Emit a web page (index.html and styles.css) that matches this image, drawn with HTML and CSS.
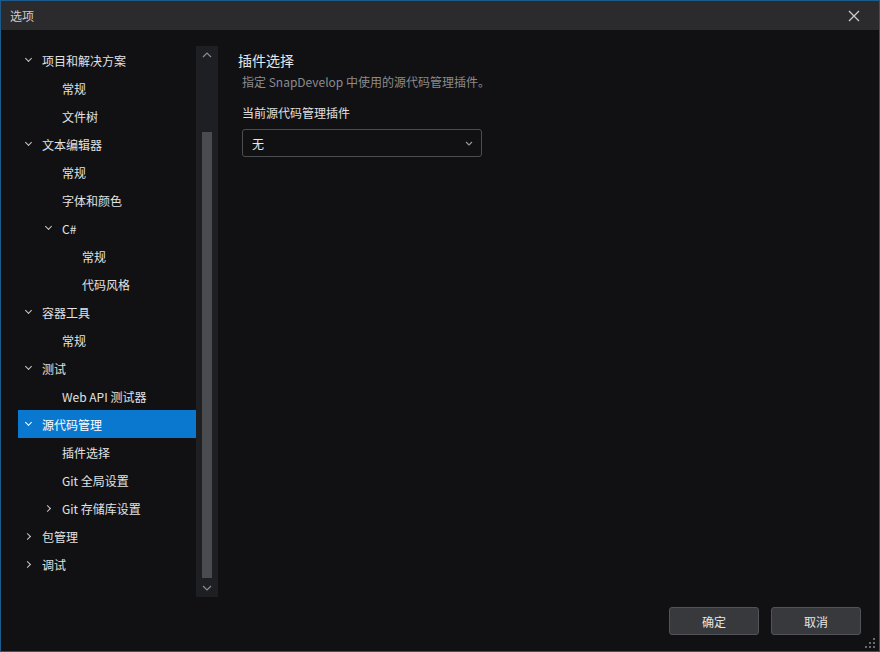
FILE: index.html
```html
<!DOCTYPE html>
<html lang="zh-CN">
<head>
    <meta charset="UTF-8">
    <title>选项</title>
    <link rel="stylesheet" href="styles.css">
</head>
<body>
    <div class="window">
        <div class="titlebar">
            <span class="title">选项</span>
            <svg class="close" width="12" height="12" viewBox="0 0 12 12">
                <path d="M1 1 L11 11 M11 1 L1 11" stroke="#cfcfcf" stroke-width="1.2" fill="none"/>
            </svg>
        </div>

        <div class="main">
            <div class="sidebar">
                <ul class="tree">
                    <li class="row lv0"><span class="chev down"></span>项目和解决方案</li>
                    <li class="row lv1"><span class="chev"></span>常规</li>
                    <li class="row lv1"><span class="chev"></span>文件树</li>
                    <li class="row lv0"><span class="chev down"></span>文本编辑器</li>
                    <li class="row lv1"><span class="chev"></span>常规</li>
                    <li class="row lv1"><span class="chev"></span>字体和颜色</li>
                    <li class="row lv1"><span class="chev down"></span>C#</li>
                    <li class="row lv2"><span class="chev"></span>常规</li>
                    <li class="row lv2"><span class="chev"></span>代码风格</li>
                    <li class="row lv0"><span class="chev down"></span>容器工具</li>
                    <li class="row lv1"><span class="chev"></span>常规</li>
                    <li class="row lv0"><span class="chev down"></span>测试</li>
                    <li class="row lv1"><span class="chev"></span>Web API 测试器</li>
                    <li class="row lv0 selected"><span class="chev down"></span>源代码管理</li>
                    <li class="row lv1"><span class="chev"></span>插件选择</li>
                    <li class="row lv1"><span class="chev"></span>Git 全局设置</li>
                    <li class="row lv1"><span class="chev right"></span>Git 存储库设置</li>
                    <li class="row lv0"><span class="chev right"></span>包管理</li>
                    <li class="row lv0"><span class="chev right"></span>调试</li>
                </ul>
                <div class="scrollbar">
                    <svg class="arrow" width="10" height="6" viewBox="0 0 10 6">
                        <path d="M1 5 L5 1 L9 5" stroke="#8d8d90" stroke-width="1.2" fill="none"/>
                    </svg>
                    <div class="track">
                        <div class="thumb"></div>
                    </div>
                    <svg class="arrow" width="10" height="6" viewBox="0 0 10 6">
                        <path d="M1 1 L5 5 L9 1" stroke="#8d8d90" stroke-width="1.2" fill="none"/>
                    </svg>
                </div>
            </div>

            <div class="content">
                <h2 class="heading">插件选择</h2>
                <p class="desc">指定 SnapDevelop 中使用的源代码管理插件。</p>
                <p class="label">当前源代码管理插件</p>
                <div class="select">
                    <span>无</span>
                    <svg width="8" height="5" viewBox="0 0 8 5">
                        <path d="M1 1 L4 4 L7 1" stroke="#9a9a9c" stroke-width="1.1" fill="none"/>
                    </svg>
                </div>
            </div>
        </div>

        <div class="footer">
            <button class="btn">确定</button>
            <button class="btn">取消</button>
        </div>

        <svg class="grip" width="10" height="10" viewBox="0 0 10 10">
            <rect x="8" y="0" width="2" height="2" fill="#6b6b6e"/>
            <rect x="4" y="4" width="2" height="2" fill="#6b6b6e"/>
            <rect x="8" y="4" width="2" height="2" fill="#6b6b6e"/>
            <rect x="0" y="8" width="2" height="2" fill="#6b6b6e"/>
            <rect x="4" y="8" width="2" height="2" fill="#6b6b6e"/>
            <rect x="8" y="8" width="2" height="2" fill="#6b6b6e"/>
        </svg>
    </div>
</body>
</html>
```

FILE: styles.css
```css
*{
    box-sizing: border-box;
}
body{
    margin: 0;
    background: #111114;
    font-family: "Noto Sans CJK SC", "Noto Sans", sans-serif;
    font-size: 12px;
    color: #e2e2e2;
}
.window{
    position: relative;
    width: 880px;
    height: 652px;
    border: 1px solid #1d5b8c;
    background: #111114;
    display: flex;
    flex-direction: column;
}
/* 标题栏 */
.titlebar{
    height: 29px;
    background: #2b2b2e;
    display: flex;
    align-items: center;
    justify-content: space-between;
    padding: 0 19px 0 9px;
}
.title{
    color: #cdcdcd;
    font-size: 12px;
}
.main{
    flex: 1;
    display: flex;
    padding: 16px 0 0 17px;
}
/* 左侧树 */
.sidebar{
    display: flex;
    height: 551px;
}
.tree{
    list-style: none;
    margin: 0;
    padding: 0;
    width: 178px;
}
.row{
    height: 28px;
    display: flex;
    align-items: center;
    padding-left: 3px;
    white-space: nowrap;
}
.lv1{
    padding-left: 23px;
}
.lv2{
    padding-left: 43px;
}
.selected{
    background: #0b78cf;
    color: #ffffff;
}
.chev{
    width: 16px;
    height: 16px;
    margin-right: 5px;
    position: relative;
    flex: none;
}
.chev.down::before, .chev.right::before{
    content: "";
    position: absolute;
    width: 4px;
    height: 4px;
    border-right: 1.2px solid #c9c9c9;
    border-bottom: 1.2px solid #c9c9c9;
}
.chev.down::before{
    left: 5px;
    top: 4px;
    transform: rotate(45deg);
}
.chev.right::before{
    left: 4px;
    top: 6px;
    transform: rotate(-45deg);
}
.selected .chev::before{
    border-color: #ffffff;
}
.scrollbar{
    width: 22px;
    background: #1e1f22;
    display: flex;
    flex-direction: column;
    align-items: center;
    padding: 6px 0 6px;
}
.arrow{
    flex: none;
}
.track{
    flex: 1;
    width: 10px;
    display: flex;
    flex-direction: column;
    justify-content: flex-end;
    padding: 0 0 7px;
}
.thumb{
    height: 446px;
    background: #4a4b4f;
}
/* 右侧内容 */
.content{
    margin-left: 20px;
}
.heading{
    margin: 0;
    font-size: 14px;
    font-weight: normal;
    line-height: 28px;
    color: #e6e6e6;
}
.desc{
    margin: 0 0 0 4px;
    line-height: 16px;
    color: #8b8b8d;
}
.label{
    margin: 15px 0 0 4px;
    line-height: 16px;
    color: #e0e0e0;
}
.select{
    margin: 8px 0 0 4px;
    width: 240px;
    height: 28px;
    border: 1px solid #4c4d51;
    border-radius: 3px;
    display: flex;
    align-items: center;
    justify-content: space-between;
    padding: 0 8px 0 9px;
    color: #e6e6e6;
}
/* 按钮 */
.footer{
    display: flex;
    justify-content: flex-end;
    gap: 12px;
    padding: 9px 18px 16px;
}
.btn{
    width: 90px;
    height: 28px;
    background: #38393d;
    border: 1px solid #525358;
    border-radius: 3px;
    color: #e6e6e6;
    font-family: "Noto Sans CJK SC", sans-serif;
    font-size: 12px;
}
.grip{
    position: absolute;
    right: 4px;
    bottom: 3px;
}
```
